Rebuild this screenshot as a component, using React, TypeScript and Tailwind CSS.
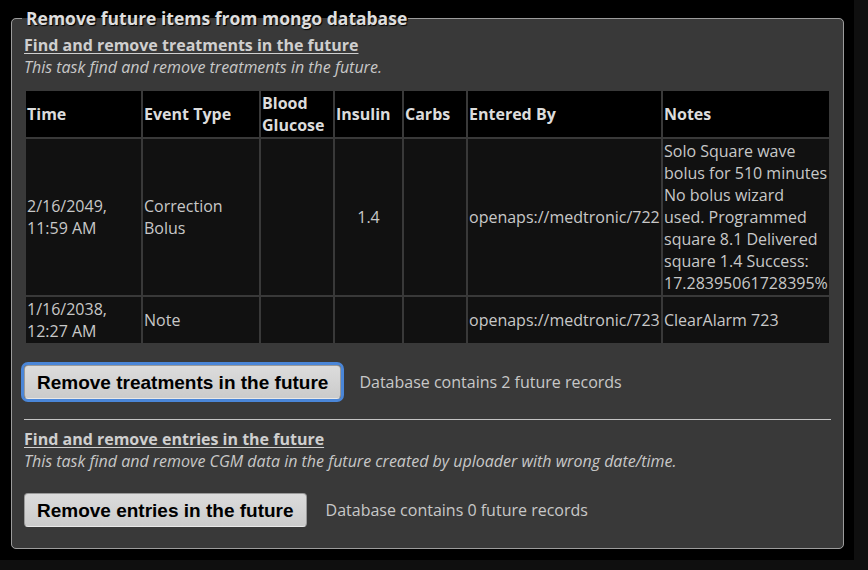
import React from "react";

const rows = [
  {
    time: ["2/16/2049,", "11:59 AM"],
    type: "Correction Bolus",
    bg: "",
    insulin: "1.4",
    carbs: "",
    by: "openaps://medtronic/722",
    notes:
      "Solo Square wave bolus for 510 minutes No bolus wizard used. Programmed square 8.1 Delivered square 1.4 Success: 17.28395061728395%",
  },
  {
    time: ["1/16/2038,", "12:27 AM"],
    type: "Note",
    bg: "",
    insulin: "",
    carbs: "",
    by: "openaps://medtronic/723",
    notes: "ClearAlarm 723",
  },
];

const font = { fontFamily: '"Open Sans", "DejaVu Sans", sans-serif' };

function ActionButton({ label, focused }: { label: string; focused?: boolean }) {
  return (
    <button
      className={
        "h-[34px] px-[12px] rounded-[4px] border border-[#9a9a9a] border-b-[#e8e8e8] bg-gradient-to-b from-[#dcdcdc] to-[#cbcbcb] text-black font-bold text-[19px] leading-none [font-family:'Liberation_Sans',Arial,sans-serif] " +
        (focused ? "ring-[3px] ring-[#4a86d8]" : "")
      }
    >
      {label}
    </button>
  );
}

export default function App() {
  return (
    <div className="w-[868px] h-[570px] bg-[#0f0f0f]" style={font}>
      <div className="w-[854px] h-[560px] bg-black pt-[7px] px-[11px]">
        <fieldset className="border border-[#9c9c9c] rounded-[5px] bg-[#393939] px-[12px] pt-[5px] pb-[21px] text-[#c8c8c8]">
          <legend className="ml-[-2px] pl-[4px] pr-[1px] text-[17.5px] leading-[22px] font-bold text-[#dedede] [text-shadow:1px_1px_1px_#000]">
            Remove future items from mongo database
          </legend>

          <h3 className="text-[16px] leading-[22px] font-bold underline underline-offset-2 text-[#cfcfcf]">
            Find and remove treatments in the future
          </h3>
          <p className="text-[16px] leading-[22px] italic text-[#c8c8c8]">
            This task find and remove treatments in the future.
          </p>

          <table className="mt-[11px] w-full table-fixed border-separate border-spacing-[2px] text-[16px] leading-[22px]">
            <colgroup>
              <col className="w-[115px]" />
              <col className="w-[116px]" />
              <col className="w-[72px]" />
              <col className="w-[67px]" />
              <col className="w-[62px]" />
              <col className="w-[193px]" />
              <col className="w-[166px]" />
            </colgroup>
            <thead>
              <tr>
                {["Time", "Event Type", "Blood Glucose", "Insulin", "Carbs", "Entered By", "Notes"].map((h) => (
                  <th key={h} className="bg-black text-left font-bold text-[#dcdcdc] px-[1px] py-[1px] align-middle">
                    {h}
                  </th>
                ))}
              </tr>
            </thead>
            <tbody>
              {rows.map((r, i) => (
                <tr key={i}>
                  <td className="bg-[#111] px-[1px] py-[1px]">
                    {r.time[0]}
                    <br />
                    {r.time[1]}
                  </td>
                  <td className="bg-[#111] px-[1px] py-[1px]">{r.type}</td>
                  <td className="bg-[#111] px-[1px] py-[1px]">{r.bg}</td>
                  <td className="bg-[#111] px-[1px] py-[1px] text-center">{r.insulin}</td>
                  <td className="bg-[#111] px-[1px] py-[1px]">{r.carbs}</td>
                  <td className="bg-[#111] px-[1px] py-[1px] whitespace-nowrap">{r.by}</td>
                  <td className="bg-[#111] px-[1px] py-[1px]">{r.notes}</td>
                </tr>
              ))}
            </tbody>
          </table>

          <div className="mt-[20px] flex items-center gap-[18px] text-[16px]">
            <ActionButton label="Remove treatments in the future" focused />
            <span>Database contains 2 future records</span>
          </div>

          <hr className="mt-[20px] border-t border-[#c4c4c4]" />

          <h3 className="mt-[8px] text-[16px] leading-[22px] font-bold underline underline-offset-2 text-[#cfcfcf]">
            Find and remove entries in the future
          </h3>
          <p className="text-[16px] leading-[22px] italic text-[#c8c8c8]">
            This task find and remove CGM data in the future created by uploader with wrong date/time.
          </p>

          <div className="mt-[21px] flex items-center gap-[19px] text-[16px]">
            <ActionButton label="Remove entries in the future" />
            <span>Database contains 0 future records</span>
          </div>
        </fieldset>
      </div>
    </div>
  );
}
